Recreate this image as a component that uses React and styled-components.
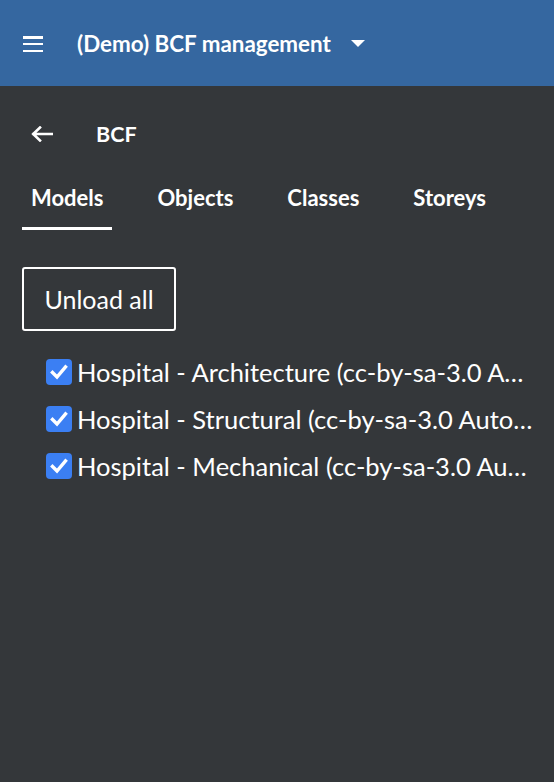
import React, { useState } from 'react';
import styled, { createGlobalStyle } from 'styled-components';

const GlobalStyle = createGlobalStyle`
  html, body {
    margin: 0;
    padding: 0;
    background: #34373a;
  }
  body {
    font-family: Lato, "Noto Sans", sans-serif;
    color: #ffffff;
  }
`;

const Page = styled.div`
  width: 554px;
  min-height: 782px;
  background: #34373a;
  display: flex;
  flex-direction: column;
`;

const AppBar = styled.header`
  height: 86px;
  background: #3567a0;
  display: flex;
  align-items: center;
  padding: 0 0 0 23px;
  box-sizing: border-box;
`;

const MenuButton = styled.button`
  width: 20px;
  height: 16px;
  padding: 0;
  border: none;
  background: transparent;
  display: flex;
  flex-direction: column;
  justify-content: space-between;
  margin-right: 34px;
  cursor: pointer;
  margin-top: 2px;
`;

const MenuLine = styled.span`
  display: block;
  height: 2.5px;
  background: #ffffff;
`;

const AppTitle = styled.div`
  font-size: 22.4px;
  font-weight: 700;
  display: flex;
  align-items: center;
  gap: 20px;
`;

const Caret = styled.span`
  width: 0;
  height: 0;
  border-left: 7.5px solid transparent;
  border-right: 7.5px solid transparent;
  border-top: 7.5px solid #ffffff;
  margin-top: 1px;
`;

const Content = styled.main`
  padding: 0 20px 0 22px;
  display: flex;
  flex-direction: column;
`;

const BackRow = styled.div`
  display: flex;
  align-items: center;
  height: 40px;
  margin-top: 28px;
`;

const BackButton = styled.button`
  border: none;
  background: transparent;
  padding: 0;
  margin-left: 9px;
  width: 22px;
  height: 16px;
  display: flex;
  cursor: pointer;
`;

const PanelTitle = styled.h1`
  margin: 0 0 0 43px;
  font-size: 21.5px;
  font-weight: 700;
`;

const Tabs = styled.nav`
  display: flex;
  gap: 36px;
  margin-top: 30px;
`;

const Tab = styled.button`
  border: none;
  background: transparent;
  color: #ffffff;
  font-family: inherit;
  font-size: 22px;
  font-weight: 700;
  padding: 0 9px;
  height: 46px;
  box-sizing: border-box;
  border-bottom: 3.5px solid ${p => (p.$active ? '#ffffff' : 'transparent')};
  cursor: pointer;
  display: flex;
  align-items: flex-start;
`;

const OutlineButton = styled.button`
  margin-top: 37px;
  align-self: flex-start;
  width: 154px;
  height: 64px;
  border: 2px solid #ffffff;
  border-radius: 3px;
  background: transparent;
  color: #ffffff;
  font-family: inherit;
  font-size: 25px;
  cursor: pointer;
`;

const ModelList = styled.ul`
  list-style: none;
  margin: 28px 0 0;
  padding: 0 0 0 24px;
  display: flex;
  flex-direction: column;
  gap: 21px;
`;

const ModelItem = styled.li`
  display: flex;
  align-items: center;
  height: 26px;
  gap: 5px;
`;

const Box = styled.span`
  flex: none;
  width: 26px;
  height: 26px;
  border-radius: 4px;
  background: ${p => (p.$checked ? '#3b7ff3' : 'transparent')};
  border: ${p => (p.$checked ? 'none' : '2px solid #ffffff')};
  display: flex;
  align-items: center;
  justify-content: center;
  box-sizing: border-box;
  cursor: pointer;
`;

const ModelName = styled.span`
  font-size: 25.5px;
  white-space: nowrap;
  overflow: hidden;
  text-overflow: ellipsis;
  min-width: 0;
  flex: 1;
  line-height: 32px;
`;

const models = [
  'Hospital - Architecture (cc-by-sa-3.0 Autodesk Inc.)',
  'Hospital - Structural (cc-by-sa-3.0 Autodesk Inc.)',
  'Hospital - Mechanical (cc-by-sa-3.0 Autodesk Inc.)',
];

const tabs = ['Models', 'Objects', 'Classes', 'Storeys'];

const App = () => {
  const [active, setActive] = useState('Models');
  const [checked, setChecked] = useState(models.map(() => true));

  const toggle = i => setChecked(c => c.map((v, j) => (j === i ? !v : v)));

  return (
    <Page>
      <GlobalStyle />
      <AppBar>
        <MenuButton aria-label="menu">
          <MenuLine />
          <MenuLine />
          <MenuLine />
        </MenuButton>
        <AppTitle>
          (Demo) BCF management
          <Caret />
        </AppTitle>
      </AppBar>
      <Content>
        <BackRow>
          <BackButton aria-label="back">
            <svg width="22" height="16" viewBox="0 0 22 16" fill="none">
              <path d="M21 8H2.5M9 1.5L2.2 8L9 14.5" stroke="#fff" strokeWidth="2.6" strokeLinecap="square" />
            </svg>
          </BackButton>
          <PanelTitle>BCF</PanelTitle>
        </BackRow>
        <Tabs>
          {tabs.map(t => (
            <Tab key={t} $active={t === active} onClick={() => setActive(t)}>
              {t}
            </Tab>
          ))}
        </Tabs>
        <OutlineButton>Unload all</OutlineButton>
        <ModelList>
          {models.map((m, i) => (
            <ModelItem key={m}>
              <Box $checked={checked[i]} onClick={() => toggle(i)}>
                {checked[i] && (
                  <svg width="18" height="16" viewBox="0 0 18 16" fill="none">
                    <path d="M2.5 8.5L7 13L15.5 3" stroke="#fff" strokeWidth="3.4" strokeLinecap="square" />
                  </svg>
                )}
              </Box>
              <ModelName>{m}</ModelName>
            </ModelItem>
          ))}
        </ModelList>
      </Content>
    </Page>
  );
};

export default App;
